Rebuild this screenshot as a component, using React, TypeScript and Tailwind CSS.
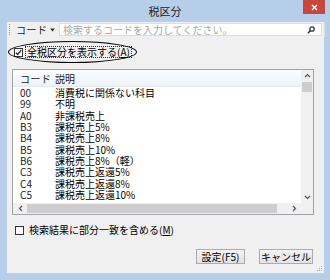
import React from "react";

const rows: [string, string][] = [
  ["00", "消費税に関係ない科目"],
  ["99", "不明"],
  ["A0", "非課税売上"],
  ["B3", "課税売上5%"],
  ["B4", "課税売上8%"],
  ["B5", "課税売上10%"],
  ["B6", "課税売上8%（軽）"],
  ["C3", "課税売上返還5%"],
  ["C4", "課税売上返還8%"],
  ["C5", "課税売上返還10%"],
];

function Check({ checked }: { checked?: boolean }) {
  return (
    <div className="w-[9px] h-[9px] border border-[#333] bg-white flex items-center justify-center shrink-0">
      {checked && (
        <svg width="7" height="7" viewBox="0 0 7 7">
          <path d="M0.8 3.6 L2.7 5.5 L6.2 1.2" fill="none" stroke="#222" strokeWidth="1.3" />
        </svg>
      )}
    </div>
  );
}

export default function App() {
  return (
    <div className="w-[330px] h-[280px] bg-[#b6cee9] flex flex-col font-['Noto_Sans_CJK_JP','Noto_Sans',sans-serif] text-black overflow-hidden whitespace-nowrap">
      {/* title bar */}
      <div className="h-[22px] relative flex items-center justify-center text-[11px] text-[#222] shrink-0">
        <span className="leading-none">税区分</span>
        <div className="absolute right-[5px] top-0 w-[22px] h-[14px] bg-[#c9463f] flex items-center justify-center">
          <svg width="7" height="7" viewBox="0 0 7 7">
            <path d="M1 1 L6 6 M6 1 L1 6" stroke="#fff" strokeWidth="1.4" />
          </svg>
        </div>
      </div>
      {/* client */}
      <div className="ml-[7px] mr-[6px] mb-[7px] flex-1 bg-[#f0f0f0] relative flex flex-col">
        {/* toolbar */}
        <div className="h-[15px] flex items-center shrink-0">
          <div className="ml-[2px] w-0 h-[11px] border-l border-dotted border-[#9a9a9a] shrink-0" />
          <span className="ml-[6px] w-[27px] text-[10px] leading-[12px] tracking-[0.5px] text-[#222] shrink-0">コード</span>
          <svg className="ml-[7px] shrink-0" width="5" height="4" viewBox="0 0 5 4">
            <path d="M0 0.5 L5 0.5 L2.5 3.5 Z" fill="#333" />
          </svg>
          <div className="ml-[4px] w-[263px] h-[13px] bg-white border border-[#dadde3] flex items-center shrink-0">
            <span className="ml-[3px] text-[10px] leading-[12px] text-[#a8a8a8]">検索するコードを入力してください。</span>
            <svg className="ml-auto mr-[6px] shrink-0" width="8" height="8" viewBox="0 0 8 8">
              <circle cx="5" cy="3" r="2.2" fill="none" stroke="#2b3a4e" strokeWidth="1.3" />
              <path d="M3.4 4.6 L0.8 7.2" stroke="#2b3a4e" strokeWidth="1.5" />
            </svg>
          </div>
          <div className="ml-[2px] w-0 h-[15px] border-l border-[#dcdcdc] shrink-0" />
        </div>
        {/* checkbox row */}
        <div className="mt-[9px] h-[12px] flex items-center shrink-0">
          <div className="ml-[7px]">
            <Check checked />
          </div>
          <div className="ml-[2px] h-[12px] px-[1px] border border-dotted border-[#333] flex items-center">
            <span className="text-[10px] leading-[10px]">
              全税区分を表示する(<span className="underline">A</span>)
            </span>
          </div>
        </div>
        {/* ellipse annotation */}
        <div className="absolute left-[1px] top-[19px] w-[129px] h-[22px] rounded-[50%] border-[1.5px] border-black pointer-events-none" />
        {/* list */}
        <div className="mt-[11px] ml-[5px] w-[302px] h-[146px] border border-[#a0a4aa] bg-white flex flex-col shrink-0">
          <div className="flex h-[133px]">
            <div className="flex-1 flex flex-col overflow-hidden">
              <div className="h-[17px] shrink-0 bg-gradient-to-b from-[#fbfcfe] to-[#eef3f9] border-b border-[#e4e8ee] flex items-center text-[10px] leading-[11px] text-[#222]">
                <span className="ml-[7px] w-[35px] tracking-[0.5px]">コード</span>
                <span>説明</span>
              </div>
              <div className="flex flex-col">
                {rows.map(([c, d]) => (
                  <div key={c} className="h-[11.3px] flex items-center text-[10px] leading-[11px]">
                    <span className="ml-[7px] w-[35px] text-[#222]">{c}</span>
                    <span>{d}</span>
                  </div>
                ))}
              </div>
            </div>
            <div className="w-[12px] bg-[#f0f0f0] flex flex-col items-center">
              <svg className="mt-[3px]" width="7" height="5" viewBox="0 0 7 5">
                <path d="M1 4 L3.5 1.5 L6 4" fill="none" stroke="#555" strokeWidth="1.2" />
              </svg>
              <div className="mt-[4px] w-[10px] h-[10px] bg-[#cdcdcd]" />
              <svg className="mt-auto mb-[3px]" width="7" height="5" viewBox="0 0 7 5">
                <path d="M1 1 L3.5 3.5 L6 1" fill="none" stroke="#555" strokeWidth="1.2" />
              </svg>
            </div>
          </div>
          <div className="flex h-[11px] bg-[#f0f0f0]">
            <div className="flex-1 flex items-center">
              <svg className="ml-[5px]" width="5" height="7" viewBox="0 0 5 7">
                <path d="M4 1 L1.5 3.5 L4 6" fill="none" stroke="#555" strokeWidth="1.2" />
              </svg>
              <div className="ml-[4px] w-[250px] h-[9px] bg-[#cdcdcd]" />
              <svg className="ml-auto mr-[4px]" width="5" height="7" viewBox="0 0 5 7">
                <path d="M1 1 L3.5 3.5 L1 6" fill="none" stroke="#555" strokeWidth="1.2" />
              </svg>
            </div>
            <div className="w-[12px] bg-[#f0f0f0]" />
          </div>
        </div>
        {/* checkbox 2 */}
        <div className="mt-[10px] h-[10px] flex items-center shrink-0">
          <div className="ml-[8px]">
            <Check />
          </div>
          <span className="ml-[5px] text-[10px] leading-[10px]">
            検索結果に部分一致を含める(<span className="underline">M</span>)
          </span>
        </div>
        {/* buttons */}
        <div className="mt-[14px] flex justify-end gap-[14px] pr-[11px] shrink-0">
          <div className="w-[49px] h-[15px] border border-[#acacac] bg-gradient-to-b from-[#f2f2f2] to-[#e3e3e3] flex items-center justify-center text-[10px] leading-[10px]">
            設定(F5)
          </div>
          <div className="w-[54px] h-[15px] border border-[#acacac] bg-gradient-to-b from-[#f2f2f2] to-[#e3e3e3] flex items-center justify-center text-[10px] leading-[10px]">
            キャンセル
          </div>
        </div>
        {/* size grip */}
        <svg className="absolute right-[1px] bottom-[1px]" width="7" height="7" viewBox="0 0 7 7">
          <rect x="5" y="1" width="1" height="1" fill="#b0b0b0" />
          <rect x="3" y="3" width="1" height="1" fill="#b0b0b0" />
          <rect x="5" y="3" width="1" height="1" fill="#b0b0b0" />
          <rect x="1" y="5" width="1" height="1" fill="#b0b0b0" />
          <rect x="3" y="5" width="1" height="1" fill="#b0b0b0" />
          <rect x="5" y="5" width="1" height="1" fill="#b0b0b0" />
        </svg>
      </div>
    </div>
  );
}
